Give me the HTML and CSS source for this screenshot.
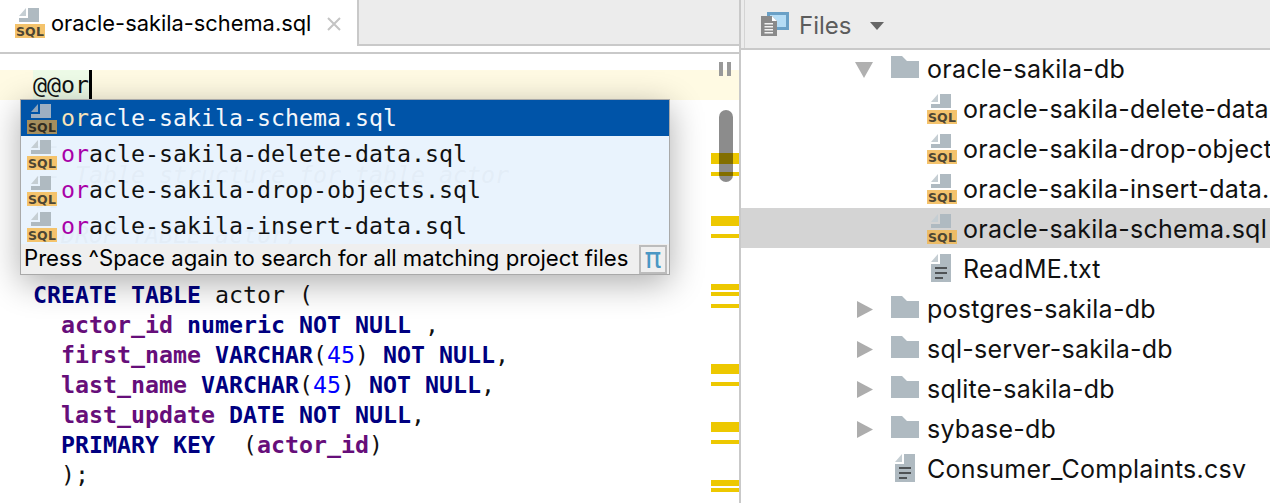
FILE: index.html
```html
<!DOCTYPE html>
<html lang="en">
<head>
<meta charset="utf-8">
<title>oracle-sakila-schema.sql</title>
<link rel="stylesheet" href="styles.css">
</head>
<body>
<svg class="sprites" aria-hidden="true">
  <symbol id="sql" viewBox="0 0 30 30">
    <path class="fold" d="M4 8L11 0V8Z"/>
    <path class="doc" d="M13 0H24V14H4V10H13Z"/>
    <rect class="label" x="0" y="16" width="30" height="14"/>
    <text class="label-text" x="15" y="27.5" text-anchor="middle">SQL</text>
  </symbol>
  <symbol id="txt" viewBox="0 0 20 28">
    <path fill="#c5ced3" d="M0 8L7 0V8Z"/>
    <path fill="#afbac1" d="M9 0H20V28H0V10H9Z"/>
    <path fill="#4f5356" d="M4 13H16V15H4ZM4 18H16V20H4ZM4 23H12V25H4Z"/>
  </symbol>
  <symbol id="folder" viewBox="0 0 28 22">
    <path fill="#afbac1" d="M0 0H11L16 5H28V22H0Z"/>
  </symbol>
  <symbol id="down" viewBox="0 0 18 16"><path fill="#b0b0b0" d="M0 0H18L9 16Z"/></symbol>
  <symbol id="right" viewBox="0 0 16 17"><path fill="#adadad" d="M0 0L16 8.5L0 17Z"/></symbol>
</svg>
<main class="app">
  <section class="left">
    <header class="tabbar">
      <div class="tab">
        <svg class="ic-sql"><use href="#sql"/></svg>
        <span class="tab-title">oracle-sakila-schema.sql</span>
        <svg class="tab-close" viewBox="0 0 14 14"><path d="M1 1L13 13M13 1L1 13"/></svg>
      </div>
      <div class="tab-fill"></div>
    </header>
    <div class="editor">
      <div class="line current"><span class="live">@@or</span><span class="caret"></span></div>
      <div class="line"> </div>
      <div class="line cm">--</div>
      <div class="line cm">-- Table structure for table actor</div>
      <div class="line cm">--</div>
      <div class="line cm">--DROP TABLE actor;</div>
      <div class="line"> </div>
      <div class="line"><b class="kw">CREATE TABLE</b> actor (</div>
      <div class="line">  <b class="col">actor_id</b> <b class="kw">numeric NOT NULL</b> ,</div>
      <div class="line">  <b class="col">first_name</b> <b class="kw">VARCHAR</b>(<span class="num">45</span>) <b class="kw">NOT NULL</b>,</div>
      <div class="line">  <b class="col">last_name</b> <b class="kw">VARCHAR</b>(<span class="num">45</span>) <b class="kw">NOT NULL</b>,</div>
      <div class="line">  <b class="col">last_update</b> <b class="kw">DATE NOT NULL</b>,</div>
      <div class="line">  <b class="kw">PRIMARY KEY</b>  (<b class="col">actor_id</b>)</div>
      <div class="line">  );</div>

      <div class="pause"><i></i><i></i></div>
      <div class="stripe">
        <i style="top:99px;height:11px"></i>
        <i style="top:118px;height:4px"></i>
        <i style="top:162px;height:10px"></i>
        <i style="top:180px;height:4px"></i>
        <i style="top:230px;height:6px"></i>
        <i style="top:238px;height:4px"></i>
        <i style="top:250px;height:4px"></i>
        <i style="top:310px;height:10px"></i>
        <i style="top:328px;height:4px"></i>
        <i style="top:368px;height:10px"></i>
        <i style="top:386px;height:4px"></i>
        <i style="top:426px;height:6px"></i>
        <i style="top:434px;height:4px"></i>
      </div>
      <div class="thumb"></div>

      <div class="popup">
        <div class="item selected"><svg class="ic-sql"><use href="#sql"/></svg><span class="name"><span class="hit">or</span>acle-sakila-schema.sql</span></div>
        <div class="item"><svg class="ic-sql"><use href="#sql"/></svg><span class="name"><span class="hit">or</span>acle-sakila-delete-data.sql</span></div>
        <div class="item"><svg class="ic-sql"><use href="#sql"/></svg><span class="name"><span class="hit">or</span>acle-sakila-drop-objects.sql</span></div>
        <div class="item"><svg class="ic-sql"><use href="#sql"/></svg><span class="name"><span class="hit">or</span>acle-sakila-insert-data.sql</span></div>
        <div class="hint">
          <span class="hint-text">Press ^Space again to search for all matching project files</span>
          <span class="pi">π</span>
        </div>
      </div>
    </div>
  </section>

  <section class="right">
    <header class="toolbar">
      <div class="toolbar-inner">
        <svg class="ic-files" viewBox="0 0 28 24">
          <rect x="7.5" y="1.5" width="19" height="15" fill="#b5dcf5" stroke="#6aa0c6" stroke-width="3"/>
          <path fill="#8a8a8a" d="M0 4H11L16 9V24H0Z"/>
          <path fill="#fff" d="M11 4L16 9H11Z"/>
          <path fill="#f2f2f2" d="M3.5 11H12V12.4H3.5ZM3.5 14H12V15.4H3.5ZM3.5 17H12V18.4H3.5ZM3.5 20H12V21.4H3.5Z"/>
        </svg>
        <span class="toolbar-title">Files</span>
        <svg class="toolbar-caret" viewBox="0 0 14 8"><path fill="#666" d="M0 0H14L7 8Z"/></svg>
      </div>
    </header>
    <ul class="tree">
      <li class="row"><svg class="ic-down"><use href="#down"/></svg><svg class="ic-folder"><use href="#folder"/></svg>oracle-sakila-db</li>
      <li class="row file"><svg class="ic-sql"><use href="#sql"/></svg>oracle-sakila-delete-data.sql</li>
      <li class="row file"><svg class="ic-sql"><use href="#sql"/></svg>oracle-sakila-drop-objects.sql</li>
      <li class="row file"><svg class="ic-sql"><use href="#sql"/></svg>oracle-sakila-insert-data.sql</li>
      <li class="row file active"><svg class="ic-sql"><use href="#sql"/></svg>oracle-sakila-schema.sql</li>
      <li class="row file"><svg class="ic-txt"><use href="#txt"/></svg>ReadME.txt</li>
      <li class="row"><svg class="ic-right"><use href="#right"/></svg><svg class="ic-folder"><use href="#folder"/></svg>postgres-sakila-db</li>
      <li class="row"><svg class="ic-right"><use href="#right"/></svg><svg class="ic-folder"><use href="#folder"/></svg>sql-server-sakila-db</li>
      <li class="row"><svg class="ic-right"><use href="#right"/></svg><svg class="ic-folder"><use href="#folder"/></svg>sqlite-sakila-db</li>
      <li class="row"><svg class="ic-right"><use href="#right"/></svg><svg class="ic-folder"><use href="#folder"/></svg>sybase-db</li>
      <li class="row top-file"><svg class="ic-txt"><use href="#txt"/></svg>Consumer_Complaints.csv</li>
    </ul>
  </section>
</main>
</body>
</html>
```
FILE: styles.css
```css
* { box-sizing: border-box; }
html, body { margin: 0; height: 100%; overflow: hidden; background: #fff; }
body { font-family: Inter, "Liberation Sans", sans-serif; color: #111; }
.sprites { position: absolute; width: 0; height: 0; }
.fold { fill: var(--fold, #c5ced3); }
.doc { fill: var(--doc, #afbac1); }
.label { fill: var(--label, #f4c36c); }
.label-text { fill: var(--label-ink, #4d4634); font: 700 12.5px "DejaVu Sans", sans-serif; letter-spacing: .2px; }

.app { display: flex; width: 1270px; height: 503px; }
.left { width: 741px; flex: none; border-right: 2px solid #c9c9c9; display: flex; flex-direction: column; }
.right { flex: 1; min-width: 0; overflow: hidden; }

.tabbar { display: flex; height: 54px; flex: none; border-bottom: 2px solid #c9c9c9; }
.tab { width: 359px; height: 46px; border-right: 2px solid #c9c9c9; display: flex; align-items: flex-start; padding: 8px 0 0 15px; }
.ic-sql { width: 30px; height: 30px; flex: none; }
.tab-title { font-size: 21.85px; line-height: 30px; margin-left: 6px; white-space: nowrap; color: #000; }
.tab-close { width: 14px; height: 14px; flex: none; margin: 9px 0 0 16px; fill: none; stroke: #c4c4c4; stroke-width: 2; }
.tab-fill { flex: 1; height: 46px; background: #ececec; border-bottom: 2px solid #c9c9c9; }

.editor { position: relative; flex: 1; padding-top: 16px; font: 23.25px/30px "DejaVu Sans Mono", monospace; color: #111; overflow: hidden; }
.line { height: 30px; padding-left: 33px; white-space: pre; }
.line.current { background: #fffae3; display: flex; }
.live { background: #edfbe7; }
.caret { width: 3px; height: 30px; background: #000; }
.cm { color: #808080; font-style: italic; }
.kw { color: #000080; font-weight: 700; }
.col { color: #660e7a; font-weight: 700; }
.num { color: #0000ff; }

.pause { position: absolute; top: 8px; left: 719px; display: flex; gap: 4px; }
.pause i { width: 4px; height: 14px; background: #999; }
.stripe { position: absolute; top: 0; right: 0; width: 28px; height: 100%; }
.stripe i { position: absolute; left: 0; right: 0; background: #edc800; }
.thumb { position: absolute; left: 719px; top: 56px; width: 14px; height: 72px; border-radius: 7px; background: rgba(0,0,0,.45); }

.popup { position: absolute; left: 20px; top: 45px; width: 650px; border: 1px solid #a9a9a9; box-shadow: 0 8px 32px rgba(0,0,0,.32); }
.item { height: 36px; display: flex; align-items: flex-start; padding: 4px 0 0 6px; background: rgba(232,242,253,.95); color: #111; }
.name { margin-left: 4px; line-height: 28px; white-space: pre; }
.hit { color: #a800a8; }
.item.selected { background: #0054a8; color: #f4f7fb; --doc: #9dafc2; --fold: #8ea4ba; --label: #a68f5d; --label-ink: #332e22; }
.item.selected .hit { color: #f6e2b8; }
.hint { height: 30px; display: flex; align-items: center; justify-content: space-between; padding: 0 2px 0 3px; background: #efefef; font: 22.15px/28px Inter, "Liberation Sans", sans-serif; color: #000; }
.hint-text { white-space: nowrap; margin-top: -2px; }
.pi { width: 28px; height: 29px; border: 2px solid #bcbcbc; color: #4a97c4; font: 28px/23px "DejaVu Sans", sans-serif; text-align: center; }

.toolbar { height: 50px; background: #ececec; border-bottom: 2px solid #c9c9c9; }
.toolbar-inner { height: 48px; margin-left: 3px; border-left: 1px solid #d4d4d4; display: flex; align-items: center; padding-left: 16px; }
.ic-files { width: 28px; height: 24px; flex: none; }
.toolbar-title { font-size: 24px; color: #5c5c5c; margin: 3px 0 0 10px; }
.toolbar-caret { width: 14px; height: 8px; margin: 4px 0 0 19px; }

.tree { list-style: none; margin: -2px 0 0; padding: 0; }
.row { height: 40px; display: flex; align-items: center; padding-top: 2px; font-size: 25px; letter-spacing: .25px; line-height: 38px; white-space: nowrap; color: #111; padding-left: 114px; }
.ic-down { width: 18px; height: 16px; flex: none; margin-top: 2px; }
.ic-right { width: 16px; height: 17px; flex: none; margin-left: 2px; }
.ic-folder { width: 28px; height: 22px; flex: none; margin: -4px 8px 0 18px; }
.file { padding-left: 186px; }
.file .ic-sql { margin-right: 6px; }
.top-file { padding-left: 150px; }
.ic-txt { width: 20px; height: 28px; flex: none; margin: -2px 12px 0 4px; }
.active { background: #d4d4d4; }
.active .ic-sql { --label: #ecbc66; }
```
